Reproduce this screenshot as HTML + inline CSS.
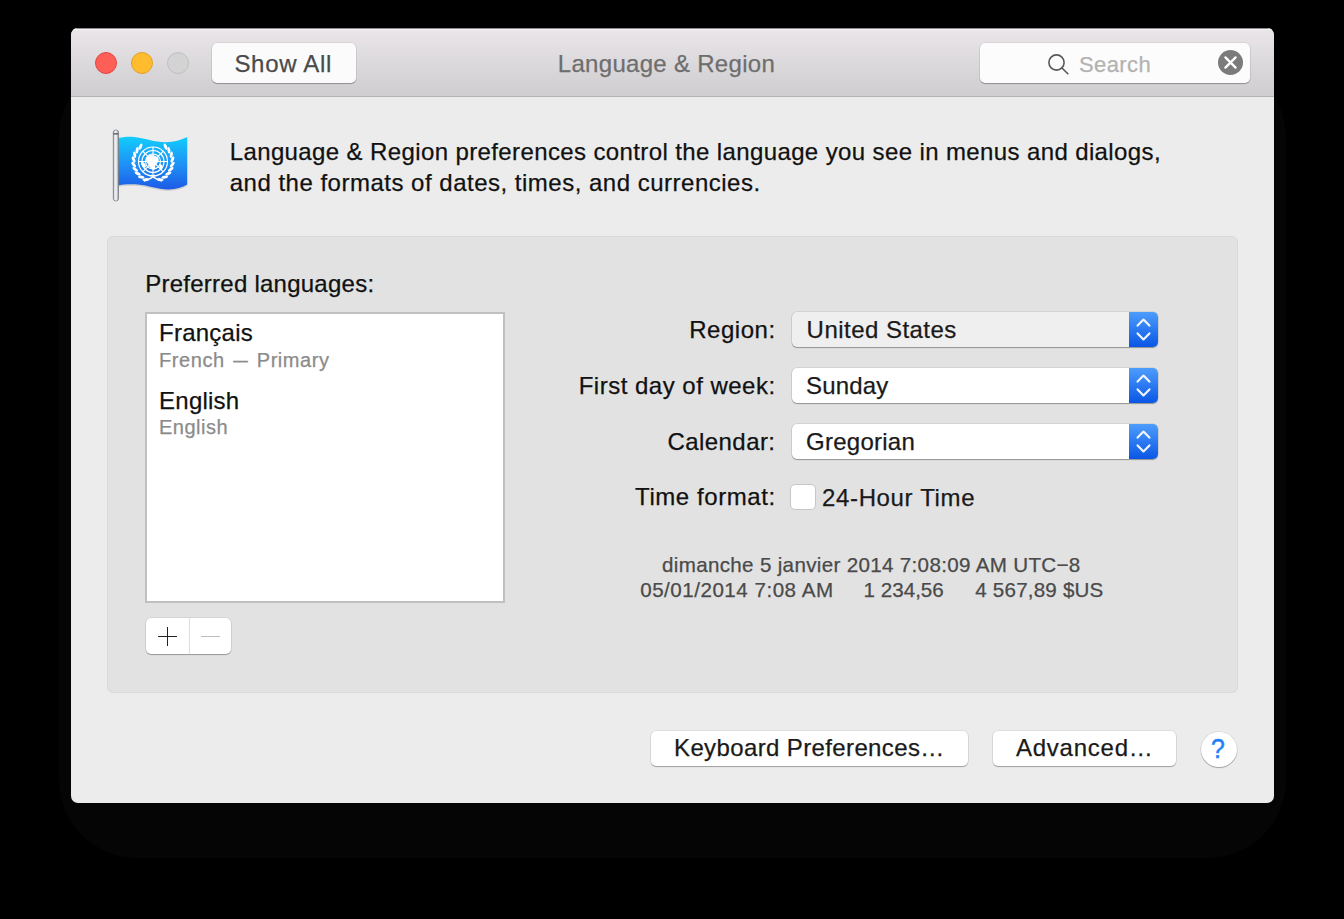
<!DOCTYPE html>
<html><head><meta charset="utf-8">
<style>
html,body{margin:0;padding:0;width:1344px;height:919px;overflow:hidden;background:#000;}
body{position:relative;font-family:"Liberation Sans",sans-serif;}
.a{position:absolute;}
.t{position:absolute;white-space:pre;line-height:1;-webkit-text-stroke:0.25px currentColor;}
#shadow{left:59px;top:59px;width:1227px;height:799px;border-radius:78px;background:#050505;}
#win{left:71px;top:28px;width:1203px;height:775px;border-radius:7px;background:#ececec;overflow:hidden;}
#tb{left:0;top:0;width:1203px;height:68px;background:linear-gradient(#eae6ea,#cfcdcf);border-bottom:1px solid #b4b2b4;box-shadow:inset 0 1px 0 #8c8a8c,inset 0 2px 0 #f6f4f6;}
.light{width:22px;height:22px;border-radius:50%;box-sizing:border-box;}
.btn{background:#fff;border-radius:5px;box-shadow:0 1px 1px rgba(0,0,0,.28),0 0 0 0.5px rgba(0,0,0,.12);}
.pop{width:366.5px;height:35px;border-radius:5px;background:#fff;box-shadow:0 1px 1px rgba(0,0,0,.3),0 0 0 0.5px rgba(0,0,0,.14);overflow:hidden;}
.stp{position:absolute;right:0;top:0;width:29px;height:35px;background:linear-gradient(#4d9dfc,#0a56e6);}
</style></head>
<body>
<div class="a" id="shadow"></div>
<div class="a" id="win">
  <div class="a" id="tb"></div>
</div>
<!-- traffic lights -->
<div class="a light" style="left:94.5px;top:52px;background:#fd5f57;border:1px solid #e2463f;"></div>
<div class="a light" style="left:130.5px;top:52px;background:#febc2e;border:1px solid #e1a128;"></div>
<div class="a light" style="left:166.5px;top:52px;background:#d3d3d3;border:1px solid #c0c0c0;"></div>
<!-- show all -->
<div class="a btn" style="left:212px;top:43px;width:144px;height:40px;background:#fbfbfb;"></div>
<div class="t" style="left:234.4px;top:51.7px;font-size:24px;color:#4a4a4a;letter-spacing:0.7px;">Show All</div>
<div class="t" style="left:557.8px;top:51.8px;font-size:24px;color:#6e6e6e;letter-spacing:0.3px;">Language &amp; Region</div>
<!-- search -->
<div class="a btn" style="left:980px;top:43px;width:270px;height:40px;background:#fcfcfc;"></div>
<div class="t" style="left:1079px;top:53.8px;font-size:22px;color:#b2b2b2;letter-spacing:0.4px;">Search</div>
<svg class="a" style="left:1046.4px;top:52px" width="26" height="26" viewBox="0 0 26 26"><circle cx="10.5" cy="10.5" r="7.6" fill="none" stroke="#585858" stroke-width="1.6"/><line x1="16" y1="16" x2="21.8" y2="21.8" stroke="#585858" stroke-width="1.6" stroke-linecap="round"/></svg>
<svg class="a" style="left:1217.9px;top:50.4px" width="25" height="25" viewBox="0 0 25 25"><circle cx="12.5" cy="12.5" r="12.5" fill="#7b7b7b"/><path d="M7.4 7.4L17.6 17.6M17.6 7.4L7.4 17.6" stroke="#fff" stroke-width="2.3" stroke-linecap="round"/></svg>

<!-- flag icon -->
<svg class="a" style="left:108px;top:126px" width="84" height="80" viewBox="0 0 84 80">
  <defs>
    <linearGradient id="fg" x1="0" y1="0" x2="0" y2="1"><stop offset="0" stop-color="#12cdfc"/><stop offset="0.55" stop-color="#1f8ef5"/><stop offset="1" stop-color="#1c5be6"/></linearGradient>
    <linearGradient id="pg" x1="0" y1="0" x2="1" y2="0"><stop offset="0" stop-color="#8c9096"/><stop offset="0.3" stop-color="#f2f3f5"/><stop offset="0.7" stop-color="#dfe2e6"/><stop offset="1" stop-color="#777b80"/></linearGradient>
  </defs>
  <path d="M9 12.3 C14 11.2, 20 10.5, 26 11 C36 12, 48 16.5, 58 16.3 C66 16.2, 73 14, 79.2 11.1 L79.2 58.6 C74 61.5, 68 63.5, 60 63.4 C50 63.2, 40 59.2, 30 58.4 C22 57.8, 15 58.2, 9 59.6 Z" fill="#000" opacity="0.12" transform="translate(0,1.5)"/>
  <path d="M9 12.3 C14 11.2, 20 10.5, 26 11 C36 12, 48 16.5, 58 16.3 C66 16.2, 73 14, 79.2 11.1 L79.2 58.6 C74 61.5, 68 63.5, 60 63.4 C50 63.2, 40 59.2, 30 58.4 C22 57.8, 15 58.2, 9 59.6 Z" fill="url(#fg)"/>
  <g fill="#fff"><ellipse cx="37.7" cy="53.6" rx="3.3" ry="1.45" transform="rotate(-186 37.7 53.6)"/><ellipse cx="33.3" cy="51.1" rx="3.3" ry="1.45" transform="rotate(-171 33.3 51.1)"/><ellipse cx="29.7" cy="47.6" rx="3.3" ry="1.45" transform="rotate(-156 29.7 47.6)"/><ellipse cx="27.2" cy="43.4" rx="3.3" ry="1.45" transform="rotate(-142 27.2 43.4)"/><ellipse cx="25.7" cy="38.6" rx="3.3" ry="1.45" transform="rotate(-127 25.7 38.6)"/><ellipse cx="25.6" cy="33.5" rx="3.3" ry="1.45" transform="rotate(-112 25.6 33.5)"/><ellipse cx="26.7" cy="28.7" rx="3.3" ry="1.45" transform="rotate(-98 26.7 28.7)"/><ellipse cx="29.1" cy="24.2" rx="3.3" ry="1.45" transform="rotate(-83 29.1 24.2)"/><ellipse cx="32.5" cy="20.6" rx="3.3" ry="1.45" transform="rotate(-68 32.5 20.6)"/><ellipse cx="52.3" cy="53.6" rx="3.3" ry="1.45" transform="rotate(6 52.3 53.6)"/><ellipse cx="56.7" cy="51.1" rx="3.3" ry="1.45" transform="rotate(-9 56.7 51.1)"/><ellipse cx="60.3" cy="47.6" rx="3.3" ry="1.45" transform="rotate(-24 60.3 47.6)"/><ellipse cx="62.8" cy="43.4" rx="3.3" ry="1.45" transform="rotate(-38 62.8 43.4)"/><ellipse cx="64.3" cy="38.6" rx="3.3" ry="1.45" transform="rotate(-53 64.3 38.6)"/><ellipse cx="64.4" cy="33.5" rx="3.3" ry="1.45" transform="rotate(-68 64.4 33.5)"/><ellipse cx="63.3" cy="28.7" rx="3.3" ry="1.45" transform="rotate(-82 63.3 28.7)"/><ellipse cx="60.9" cy="24.2" rx="3.3" ry="1.45" transform="rotate(-97 60.9 24.2)"/><ellipse cx="57.5" cy="20.6" rx="3.3" ry="1.45" transform="rotate(-112 57.5 20.6)"/></g>
  <g fill="none" stroke="#fff" stroke-width="1.15">
    <circle cx="45" cy="35.5" r="14.5"/><circle cx="45" cy="35.5" r="11"/><circle cx="45" cy="35.5" r="7.5"/><circle cx="45" cy="35.5" r="4"/>
    <path d="M45 21V50M30.5 35.5H59.5M34.7 25.2L55.3 45.8M55.3 25.2L34.7 45.8"/>
    <path d="M36 55 C40 54, 44 52, 47 49 M54 55 C50 54, 46 52, 43 49" stroke-width="1.6"/>
  </g>
  <path fill="#fff" d="M40 30 C43 28, 47 29, 49 31 C52 33, 51 36, 48 38 C46 40, 49 42, 46 44 C43 43, 41 41, 40 38 C38 35, 37 32, 40 30Z M33 36 C35 35, 38 38, 38 41 C36 43, 33 41, 33 36Z M52 38 C55 39, 56 42, 53 44 C51 43, 51 40, 52 38Z"/>
  <rect x="5.3" y="4" width="5.2" height="71" rx="2.4" fill="url(#pg)" stroke="#7c8086" stroke-width="0.8"/>
  <rect x="5.3" y="7" width="4.9" height="1.6" fill="#6a6e74"/>
</svg>
<div class="t" style="left:229.7px;top:139.7px;font-size:24px;color:#111;letter-spacing:0.383px;">Language &amp; Region preferences control the language you see in menus and dialogs,</div>
<div class="t" style="left:229.7px;top:170.6px;font-size:24px;color:#111;letter-spacing:0.5px;">and the formats of dates, times, and currencies.</div>

<!-- group box -->
<div class="a" style="left:107px;top:236px;width:1129px;height:455px;border:1px solid #d9d9d9;border-radius:6px;background:#e2e2e2;"></div>
<div class="t" style="left:145.2px;top:271.5px;font-size:24px;color:#111;letter-spacing:0.25px;">Preferred languages:</div>
<div class="a" style="left:145px;top:312px;width:356px;height:287px;border:2px solid #c0c0c0;background:#fff;"></div>
<div class="t" style="left:159.1px;top:321.3px;font-size:24px;color:#111;letter-spacing:0.23px;">Français</div>
<div class="t" style="left:159.1px;top:350.2px;font-size:20px;color:#8b8b8b;letter-spacing:0.55px;word-spacing:4.1px;">French <span style="display:inline-block;transform:scaleX(1.3)">–</span> Primary</div>
<div class="t" style="left:159.1px;top:388.5px;font-size:24px;color:#111;letter-spacing:0.23px;">English</div>
<div class="t" style="left:159px;top:416.6px;font-size:20px;color:#8b8b8b;letter-spacing:0.5px;">English</div>

<!-- +/- -->
<div class="a btn" style="left:146px;top:618px;width:85px;height:36px;"></div>
<div class="a" style="left:189px;top:618px;width:1px;height:36px;background:#dedede;"></div>
<div class="a" style="left:158px;top:635.5px;width:19px;height:1.6px;background:#222;"></div>
<div class="a" style="left:166.7px;top:627px;width:1.6px;height:19px;background:#222;"></div>
<div class="a" style="left:201px;top:635.5px;width:19px;height:1.6px;background:#bdbdbd;"></div>

<!-- labels -->
<div class="t" style="right:568.4px;top:318.4px;font-size:24px;color:#111;letter-spacing:0.52px;">Region:</div>
<div class="t" style="right:568.4px;top:374.2px;font-size:24px;color:#111;letter-spacing:0.49px;">First day of week:</div>
<div class="t" style="right:568.5px;top:429.8px;font-size:24px;color:#111;letter-spacing:0.45px;">Calendar:</div>
<div class="t" style="right:568.4px;top:485.3px;font-size:24px;color:#111;letter-spacing:0.56px;">Time format:</div>

<!-- popups -->
<div class="a pop" style="left:791.5px;top:312px;background:#efefef;"><div class="stp"><svg class="a" style="left:0;top:0" width="29" height="35" viewBox="0 0 29 35"><path d="M8.6 13.6L14.5 7.6L20.4 13.6M8.6 21.4L14.5 27.4L20.4 21.4" fill="none" stroke="#eef4ff" stroke-width="2.2" stroke-linecap="round" stroke-linejoin="round"/></svg></div></div>
<div class="a pop" style="left:791.5px;top:368px;"><div class="stp"><svg class="a" style="left:0;top:0" width="29" height="35" viewBox="0 0 29 35"><path d="M8.6 13.6L14.5 7.6L20.4 13.6M8.6 21.4L14.5 27.4L20.4 21.4" fill="none" stroke="#eef4ff" stroke-width="2.2" stroke-linecap="round" stroke-linejoin="round"/></svg></div></div>
<div class="a pop" style="left:791.5px;top:424px;"><div class="stp"><svg class="a" style="left:0;top:0" width="29" height="35" viewBox="0 0 29 35"><path d="M8.6 13.6L14.5 7.6L20.4 13.6M8.6 21.4L14.5 27.4L20.4 21.4" fill="none" stroke="#eef4ff" stroke-width="2.2" stroke-linecap="round" stroke-linejoin="round"/></svg></div></div>
<div class="t" style="left:806.6px;top:318px;font-size:24px;color:#1a1a1a;letter-spacing:0.47px;">United States</div>
<div class="t" style="left:806px;top:374px;font-size:24px;color:#1a1a1a;letter-spacing:0.18px;">Sunday</div>
<div class="t" style="left:806px;top:429.8px;font-size:24px;color:#1a1a1a;letter-spacing:0.26px;">Gregorian</div>
<div class="a" style="left:790px;top:484px;width:25.5px;height:25.5px;box-sizing:border-box;border:1.5px solid #c6c6c6;border-radius:5px;background:#fff;"></div>
<div class="t" style="left:822px;top:485.6px;font-size:24px;color:#1a1a1a;letter-spacing:0.65px;">24-Hour Time</div>

<div class="t" style="left:662px;top:555.3px;font-size:20.6px;color:#4a4a4a;letter-spacing:0.32px;">dimanche 5 janvier 2014 7:08:09 AM UTC−8</div>
<div class="t" style="left:640.2px;top:580.4px;font-size:20.6px;color:#4a4a4a;letter-spacing:0.5px;">05/01/2014 7:08 AM</div>
<div class="t" style="left:863.6px;top:580.4px;font-size:20.6px;color:#4a4a4a;">1 234,56</div>
<div class="t" style="left:975.3px;top:580.4px;font-size:20.6px;color:#4a4a4a;letter-spacing:0.19px;">4 567,89 $US</div>

<!-- bottom buttons -->
<div class="a btn" style="left:650.5px;top:730.5px;width:317.5px;height:35px;"></div>
<div class="t" style="left:674px;top:736px;font-size:24px;color:#1a1a1a;letter-spacing:0.375px;">Keyboard Preferences…</div>
<div class="a btn" style="left:992.5px;top:730.5px;width:183.5px;height:35px;"></div>
<div class="t" style="left:1016px;top:736px;font-size:24px;color:#1a1a1a;letter-spacing:0.75px;">Advanced…</div>
<div class="a btn" style="left:1201px;top:731.5px;width:35.5px;height:35.5px;border-radius:50%;"></div>
<div class="t" id="help" style="left:1211px;top:735.5px;font-size:27px;color:#1f7ffb;-webkit-text-stroke:0.5px #1f7ffb;transform:scaleX(0.92);transform-origin:left top;">?</div>

</body></html>
